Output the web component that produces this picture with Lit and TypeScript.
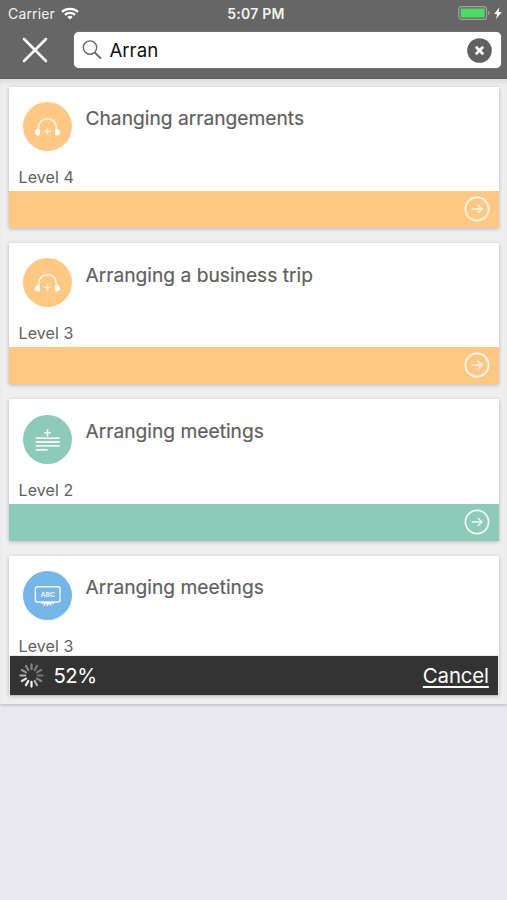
import { LitElement, html, css, svg } from "lit";
import { customElement, property } from "lit/decorators.js";

type Kind = "audio" | "text" | "board";

interface Lesson {
  title: string;
  level: number;
  kind: Kind;
  progress?: number;
}

const LESSONS: Lesson[] = [
  { title: "Changing arrangements", level: 4, kind: "audio" },
  { title: "Arranging a business trip", level: 3, kind: "audio" },
  { title: "Arranging meetings", level: 2, kind: "text" },
  { title: "Arranging meetings", level: 3, kind: "board", progress: 52 },
];

const GLYPHS = {
  audio: svg`
    <path d="M15.6 28v-2.4c0-5 3.8-8.9 8.9-8.9s8.9 3.9 8.9 8.9V28" fill="none" stroke="#fff" stroke-width="1.4" opacity=".85"/>
    <path d="M16.9 27.4v5.6q-.9.4-1.8.4a3.1 3.1 0 1 1 0-6.2zM32.1 27.4v5.6q.9.4 1.8.4a3.1 3.1 0 1 0 0-6.2z" fill="#fff"/>
    <path d="M24.5 25.7v7.4M20.8 29.4h7.4" stroke="#fff" stroke-width="1.3" opacity=".85"/>`,
  text: svg`
    <path d="M24.5 14.2v7M21 17.7h7" stroke="#fff" stroke-width="1.6" opacity=".85"/>
    <path d="M12.7 23.1h24M12.7 27h24M12.7 30.9h24M12.7 34.9h12" stroke="#fff" stroke-width="1.8" opacity=".85"/>`,
  board: svg`
    <rect x="12.4" y="15.7" width="24.6" height="15.4" rx="2" fill="none" stroke="#fff" stroke-width="1.5" opacity=".85"/>
    <text x="24.7" y="26.1" text-anchor="middle" textLength="14.6" font-family="Inter, sans-serif" font-size="6.8" font-weight="700" fill="#fff" opacity=".85">ABC</text>
    <path d="M18.5 31h12.4l-.3 2.4-2.2-1.4-.2 3.4-2.2-2.8-1.5 2.9-1.5-2.9-2.2 2.8-.1-3.4-2 1.2z" fill="#fff"/>`,
};

@customElement("status-bar")
class StatusBar extends LitElement {
  static styles = css`
    :host { display: grid; grid-template-columns: 1fr auto 1fr; align-items: center; height: 27px; padding: 0 5px 0 8px; color: #f2f2f2; font-size: 14px; box-sizing: border-box; }
    .left { display: flex; align-items: center; gap: 6px; letter-spacing: 0.15px; }
    .time { font-weight: 600; font-size: 14px; letter-spacing: 0.25px; margin-left: 2px; }
    .right { display: flex; justify-content: flex-end; align-items: center; gap: 3px; }
    svg { display: block; margin-top: -1px; }
  `;
  render() {
    return html`
      <div class="left">
        <span>Carrier</span>
        <svg width="18" height="13" viewBox="0 0 18 13">
          <path d="M1 4.8C5.4.9 12.6.9 17 4.8M3.9 7.9c2.9-2.6 7.3-2.6 10.2 0" fill="none" stroke="#fff" stroke-width="2.3"/>
          <path d="M6.3 9.9a4 4 0 0 1 5.4 0L9 12.6z" fill="#fff"/>
        </svg>
      </div>
      <div class="time">5:07 PM</div>
      <div class="right">
        <svg width="33" height="14" viewBox="0 0 33 14">
          <rect x=".8" y=".6" width="27.8" height="12.8" rx="3" fill="none" stroke="#a2a2a2" stroke-width="1.1"/>
          <rect x="2.6" y="2.4" width="24.2" height="9.2" rx="1" fill="#4cd964"/>
          <path d="M30.1 4.8q1.5.6 1.5 2.2t-1.5 2.2z" fill="#a2a2a2"/>
        </svg>
        <svg width="8" height="12" viewBox="0 0 8 12"><path d="M5.5.2.2 6.9h3L2 11.9 7.8 4.9H4.6z" fill="#fff"/></svg>
      </div>`;
  }
}

@customElement("search-bar")
class SearchBar extends LitElement {
  @property() query = "";
  static styles = css`
    :host { display: flex; height: 52px; padding: 5px 6.5px 0 0; box-sizing: border-box; }
    .close { width: 74.4px; height: 36px; display: flex; padding-left: 22px; align-items: center; box-sizing: border-box; }
    .field { flex: 1; height: 36px; display: flex; align-items: center; padding: 0 8.5px 0 8px; box-sizing: border-box; background: #fff; border-radius: 5px; box-shadow: 0 0 1px #ddd; }
    .query { flex: 1; margin-left: 7px; color: #111; font-size: 18.7px; }
    svg { display: block; }
  `;
  render() {
    return html`
      <div class="close">
        <svg width="26" height="26" viewBox="0 0 26 26"><path d="M2 2l22 22M24 2L2 24" stroke="#fff" stroke-width="2.5" stroke-linecap="round"/></svg>
      </div>
      <div class="field">
        <svg width="20" height="20" viewBox="0 0 20 20"><circle cx="8" cy="7.6" r="6.7" fill="none" stroke="#666" stroke-width="1.4"/><path d="M12.8 12.6l6.2 6" stroke="#666" stroke-width="2"/></svg>
        <span class="query">${this.query}</span>
        <svg width="25" height="25" viewBox="0 0 25 25"><circle cx="12.5" cy="12.5" r="12.3" fill="#606060"/><path d="M8.8 8.8l7.4 7.4M16.2 8.8l-7.4 7.4" stroke="#fff" stroke-width="2.7"/></svg>
      </div>`;
  }
}

@customElement("download-bar")
class DownloadBar extends LitElement {
  @property({ type: Number }) percent = 0;
  static styles = css`
    :host { display: flex; align-items: center; height: 39.4px; margin: 0 1px; padding: 0 9.5px 0 9px; box-sizing: border-box; background: #333; color: #fff; font-size: 20.3px; box-shadow: 0 0 1px #7c8488; }
    .percent { flex: 1; margin-left: 10px; letter-spacing: -0.5px; padding-top: 1px; }
    .cancel { text-decoration: underline; text-decoration-thickness: 1.5px; text-underline-offset: 2.5px; font-size: 20.4px; letter-spacing: -0.15px; }
    svg { display: block; }
  `;
  render() {
    return html`
      <svg width="25" height="25" viewBox="0 0 25 25">
        ${Array.from({ length: 12 }, (_, i) => {
          const shade = [0.38, 0.35, 0.33, 0.32, 0.42, 0.62, 0.95, 0.95, 0.88, 0.65, 0.48, 0.4][i];
          return svg`<path d="M12.5 1.4v4.8" stroke="#fff" stroke-width="2.2" stroke-linecap="round" opacity=${shade} transform="rotate(${i * 30} 12.5 12.5)"/>`;
        })}
      </svg>
      <span class="percent">${this.percent}%</span>
      <span class="cancel">Cancel</span>`;
  }
}

@customElement("lesson-card")
class LessonCard extends LitElement {
  @property({ attribute: false }) lesson!: Lesson;
  static styles = css`
    :host { display: block; background: #fff; box-shadow: 0 1px 4px rgba(0, 0, 0, 0.23); color: #606060; }
    .audio { background: #ffc884; }
    .text { background: #8dcab7; }
    .board { background: #76b5e8; }
    .info { display: grid; grid-template-columns: 49px 1fr; grid-template-rows: 49px 1fr; column-gap: 14px; height: 104.2px; padding: 15.3px 14px 0; box-sizing: border-box; }
    .info.short { height: 100px; }
    .badge { width: 49px; height: 49px; border-radius: 50%; }
    .title { font-size: 19.2px; line-height: 24px; padding-top: 4.3px; -webkit-text-stroke: 0.2px #606060; }
    .level { grid-column: 1 / -1; margin: 16px 0 0 -4px; font-size: 16px; line-height: 20px; letter-spacing: 0.1px; }
    .foot { height: 37px; display: flex; align-items: center; justify-content: flex-end; padding: 0 9px 0.6px 0; box-sizing: border-box; }
    svg { display: block; }
  `;
  render() {
    const { title, level, kind, progress } = this.lesson;
    const loading = progress !== undefined;
    return html`
      <div class="info ${loading ? "short" : ""}">
        <div class="badge ${kind}"><svg width="49" height="49" viewBox="0 0 49 49">${GLYPHS[kind]}</svg></div>
        <div class="title">${title}</div>
        <div class="level">Level ${level}</div>
      </div>
      ${loading
        ? html`<download-bar .percent=${progress}></download-bar>`
        : html`<div class="foot ${kind}">
            <svg width="26" height="26" viewBox="0 0 26 26" fill="none" stroke="#fff" opacity=".9"><circle cx="13" cy="13" r="11.6" stroke-width="1.7"/><path d="M7.8 13h10M13.8 9l4.2 4-4.2 4" stroke-width="1.4"/></svg>
          </div>`}`;
  }
}

@customElement("app-root")
class AppRoot extends LitElement {
  static styles = css`
    :host { display: block; height: 900px; overflow: hidden; background: #e8e8ee; font-family: Inter, "Liberation Sans", sans-serif; }
    .header { height: 79px; background: #666; }
    .list { display: flex; flex-direction: column; gap: 15.1px; height: 625px; padding: 7.8px 7.7px 0 8.5px; box-sizing: border-box; background: #efefef; box-shadow: 0 1px 3px rgba(0, 0, 0, 0.22), inset 0 5px 6px -3px rgba(0, 0, 0, 0.12); }
  `;
  render() {
    return html`
      <div class="header">
        <status-bar></status-bar>
        <search-bar query="Arran"></search-bar>
      </div>
      <div class="list">${LESSONS.map((l) => html`<lesson-card .lesson=${l}></lesson-card>`)}</div>`;
  }
}
